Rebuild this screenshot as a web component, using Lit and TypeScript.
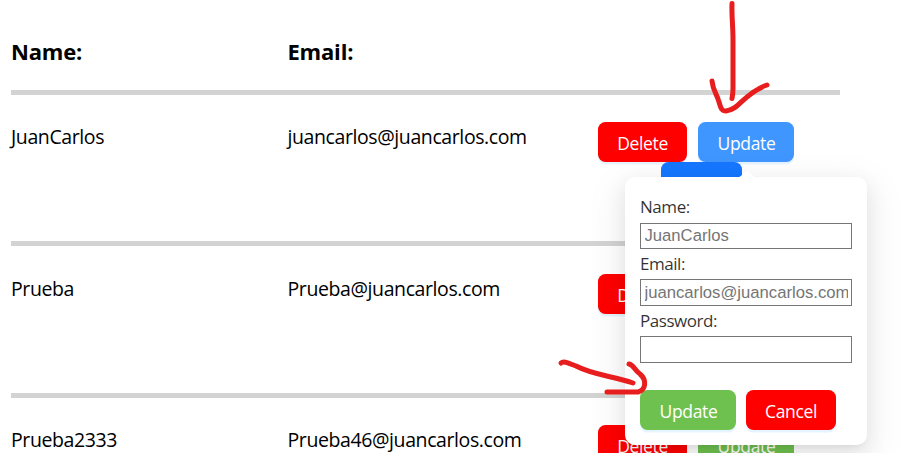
import { LitElement, html, css, svg } from "lit";
import { customElement } from "lit/decorators.js";

interface User { name: string; email: string; updateTone: string }

const USERS: User[] = [
  { name: "JuanCarlos", email: "juancarlos@juancarlos.com", updateTone: "sky" },
  { name: "Prueba", email: "Prueba@juancarlos.com", updateTone: "green" },
  { name: "Prueba2333", email: "Prueba46@juancarlos.com", updateTone: "green" },
];

// Freehand pen marks: shaft and head of the two arrows.
const STROKES = [
  "M732 3.5 C731.5 15 733 26 733 40 L733 88 Q733 94 732 98.5",
  "M712 81 C713 91 717 94 719 102 C721 109 722 111 726 111 C739 110 744 93 767 85",
  "M561 363 C564 360 570 364 576 366 C593 375 613 376 633 383",
  "M629 364 C634 365 634 370 640 374 C647 380 646 390 638 392 L607 392",
];

@customElement("app-root")
export class AppRoot extends LitElement {
  static styles = css`
    :host { display: block; position: relative; width: 913px; height: 453px; overflow: hidden; background: #fff;
      font-family: "Open Sans", "Noto Sans", sans-serif; color: #000; }
    * { box-sizing: border-box; }
    .table { width: 829px; margin-left: 11px; font-size: 19.5px; font-weight: 400; line-height: 28px; letter-spacing: -0.4px; }
    .head, .row { display: grid; grid-template-columns: 276.5px 310.5px 1fr; align-items: start; border-bottom: 5px solid #d3d3d3; }
    .head { height: 95px; padding-top: 37px; font-weight: 700; font-size: 22px; letter-spacing: -0.2px; }
    .row { height: 151.34px; padding-top: 27.3px; }
    .cell { padding-top: 1px; }
    .actions { display: flex; gap: 11px; flex-wrap: wrap; width: 208px; }
    .btn { display: block; height: 40px; padding: 0; border: 0; border-radius: 7.5px; color: #fff; font: 400 17.5px/43px "Open Sans", "Noto Sans", sans-serif;
      letter-spacing: -0.35px; text-align: center; box-shadow: 0 2.5px 0 rgba(5, 145, 255, 0.1); white-space: nowrap; }
    .red { background: #f00; width: 89px; }
    .sky { background: #4096ff; width: 96px; padding-left: 1px; }
    .green { background: #6fc14f; width: 96px; padding-left: 1px; }
    .blue { background: #1677ff; width: 81px; margin: -11px 0 0 63px; font-size: 13.5px; line-height: 38px; }
    .popup { position: absolute; left: 625px; top: 177px; width: 242px; height: 268px; padding: 15px; border-radius: 10px; background: #fff;
      box-shadow: 0 7.5px 20px rgba(0,0,0,.08), 0 3.75px 7.5px -5px rgba(0,0,0,.12), 0 11px 35px 10px rgba(0,0,0,.05);
      display: flex; flex-direction: column; font-size: 17px; font-weight: 400; color: rgba(0,0,0,.82); letter-spacing: -0.45px; }
    .arrow { position: absolute; left: 737px; top: 170px; display: block; }
    .label { display: block; height: 31px; line-height: 29px; }
    .input { display: block; width: 212px; height: 26px; margin: 0; padding: 0 3.5px; border: 1px solid #767676; border-radius: 0; background: #fff;
      font: 16.67px "Liberation Sans", Arial, sans-serif; outline: none; }
    .input::placeholder { color: #757575; opacity: 1; }
    .label.next { height: 30px; line-height: 29px; }
    .input.tall { height: 27px; }
    .footer { display: flex; gap: 10px; margin-top: 27px; }
    .cancel { width: 90px; }
    .ink { position: absolute; left: 0; top: 0; pointer-events: none; }
  `;

  private renderRow(u: User, i: number) {
    return html`<div class="row">
      <div class="cell">${u.name}</div>
      <div class="cell">${u.email}</div>
      <div class="actions">
        <button class="btn red">Delete</button>
        <button class="btn ${u.updateTone}">Update</button>
        ${i === 0 ? html`<button class="btn blue">Update</button>` : ""}
      </div>
    </div>`;
  }

  render() {
    return html`
      <div class="table">
        <div class="head"><div>Name:</div><div>Email:</div></div>
        ${USERS.map((u, i) => this.renderRow(u, i))}
      </div>
      <div class="popup">
        <label class="label">Name:</label>
        <input class="input" placeholder="JuanCarlos" />
        <label class="label next">Email:</label>
        <input class="input tall" placeholder="juancarlos@juancarlos.com" />
        <label class="label next">Password:</label>
        <input class="input tall" type="password" />
        <div class="footer">
          <button class="btn green">Update</button>
          <button class="btn red cancel">Cancel</button>
        </div>
      </div>
      <svg class="arrow" width="20" height="8"><path d="M0 8 Q3 7 5 5 L8 2 Q10 0 12 2 L15 5 Q17 7 20 8Z" fill="#fff" /></svg>
      <svg class="ink" width="913" height="453" fill="none" stroke="#e81e1e" stroke-width="5" stroke-linecap="round" stroke-linejoin="round">
        ${STROKES.map((d) => svg`<path d=${d} />`)}
      </svg>`;
  }
}
